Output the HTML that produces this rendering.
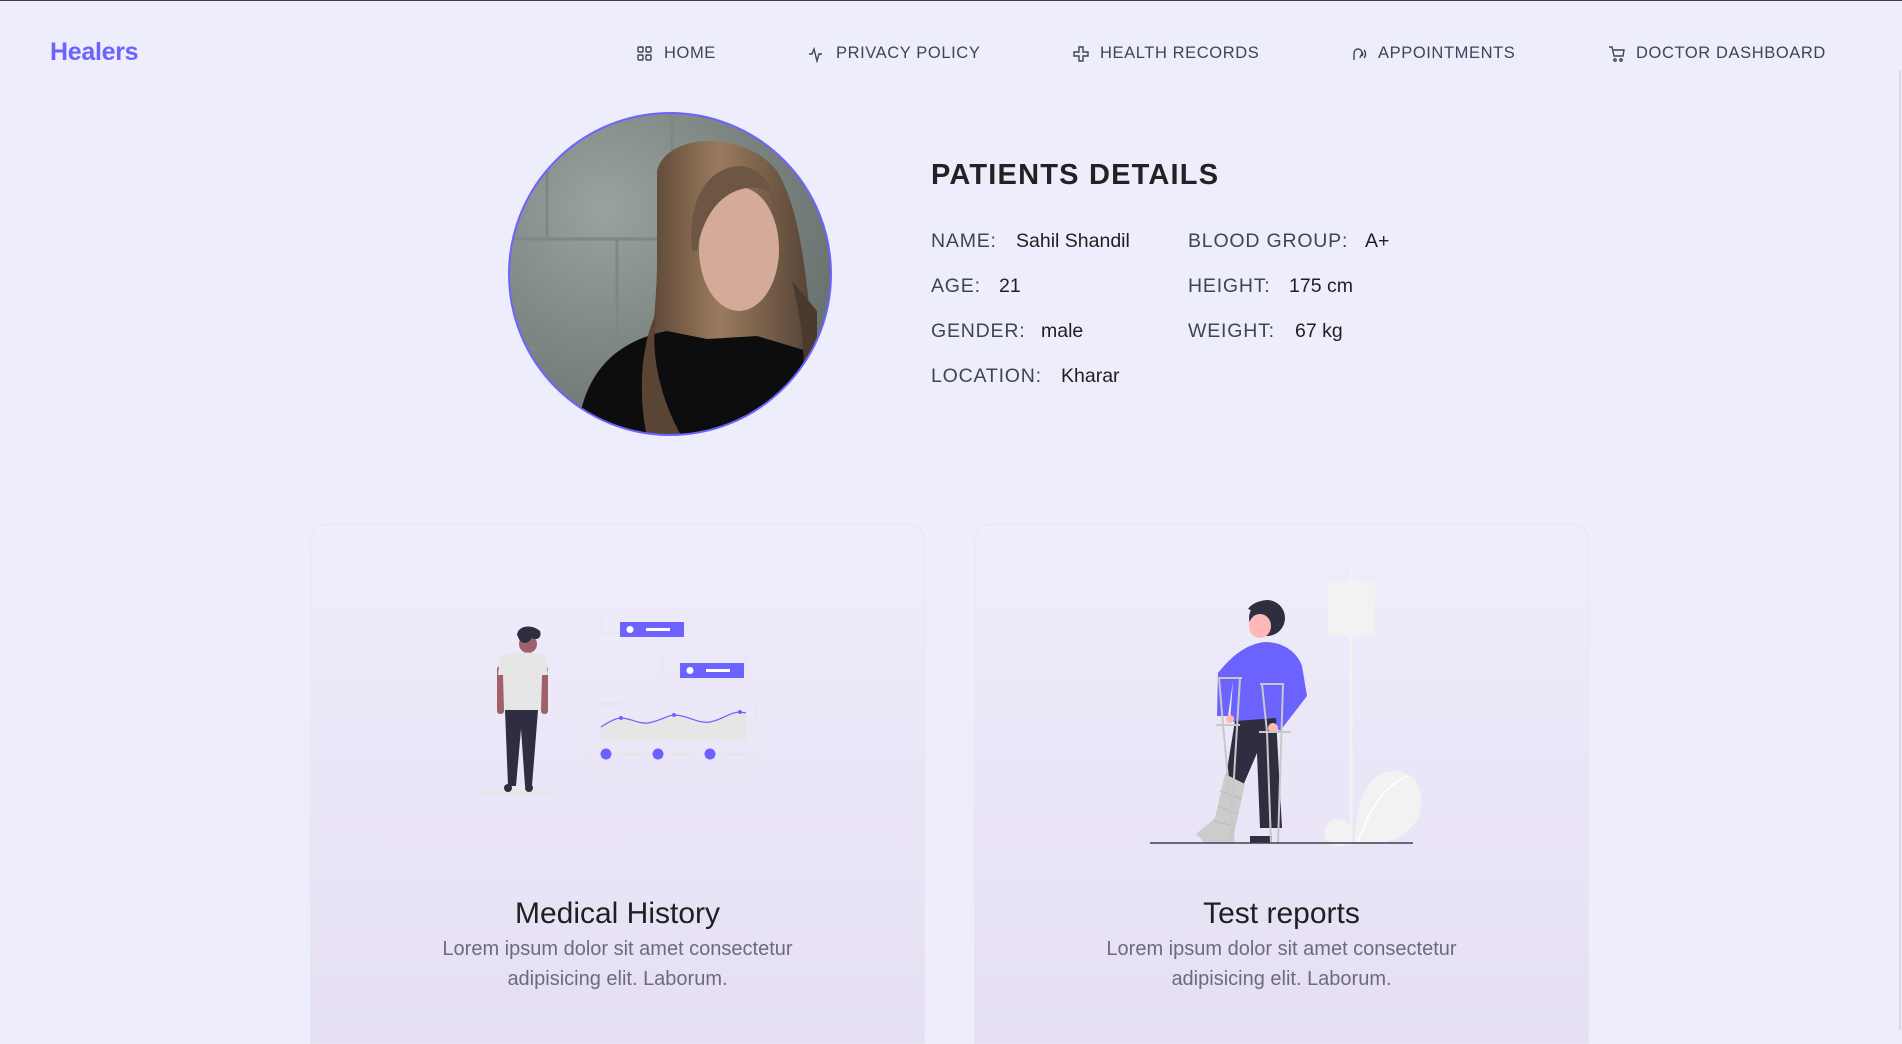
<!DOCTYPE html>
<html><head><meta charset="utf-8"><style>
*{margin:0;padding:0;box-sizing:border-box}
body{width:1902px;height:1029px;overflow:hidden;background:#eeedfb;font-family:"Liberation Sans",sans-serif;position:relative;border-top:1px solid #4a3a35}
.abs{position:absolute;white-space:nowrap}
.logo{left:50px;top:37px;font-size:25px;font-weight:bold;color:#6c63ff;letter-spacing:-0.3px}
.nav{top:43px;font-size:16.5px;color:#3d4556;letter-spacing:0.6px}
.nav svg{position:absolute;left:-28px;top:1px}
.title{left:931px;top:158px;font-size:29px;font-weight:bold;color:#222;letter-spacing:1.2px}
.lb{font-size:19.5px;color:#3d4556;letter-spacing:0.8px}
.vl{font-size:19.5px;color:#1f1f1f}
.card{position:absolute;top:523px;width:615px;height:520px;border-radius:16px 16px 0 0;border:1px solid #e7e5f3;background:linear-gradient(#efedfc,#ebe7f8 40%,#e6dff3)}
.ct{position:absolute;width:100%;text-align:center;top:372px;font-size:30px;color:#1f1f1f}
.cd{position:absolute;width:100%;text-align:center;top:409px;font-size:20px;line-height:30px;color:#6b6b80}
</style></head><body>
<div class="abs logo">Healers</div>

<div class="abs nav" style="left:664px"><svg width="17" height="17" viewBox="0 0 17 17" fill="none" stroke="#3d4556" stroke-width="1.4"><rect x="2" y="2" width="5" height="5" rx="1"/><rect x="10" y="2" width="5" height="5" rx="1"/><rect x="2" y="10" width="5" height="5" rx="1"/><rect x="10" y="10" width="5" height="5" rx="1"/></svg>HOME</div>
<div class="abs nav" style="left:836px"><svg width="18" height="18" viewBox="0 0 18 18" fill="none" stroke="#3d4556" stroke-width="1.4"><path d="M1 9h3l2-5 3 12 2-7h3"/></svg>PRIVACY POLICY</div>
<div class="abs nav" style="left:1100px"><svg width="18" height="18" viewBox="0 0 18 18" fill="none" stroke="#3d4556" stroke-width="1.4"><path d="M7 2h4v5h5v4h-5v5H7v-5H2V7h5z"/></svg>HEALTH RECORDS</div>
<div class="abs nav" style="left:1378px"><svg width="18" height="18" viewBox="0 0 18 18" fill="none" stroke="#3d4556" stroke-width="1.4"><path d="M4 15V8a4 4 0 0 1 8 0c0 2-2 3-2 5M12 7c1 1 1 3 0 4M14 5c2 2 2 6 0 8"/></svg>APPOINTMENTS</div>
<div class="abs nav" style="left:1636px"><svg width="18" height="18" viewBox="0 0 18 18" fill="none" stroke="#3d4556" stroke-width="1.4"><path d="M1 2h3l2 9h9l1-6H5"/><circle cx="7" cy="15" r="1.2"/><circle cx="13" cy="15" r="1.2"/></svg>DOCTOR DASHBOARD</div>

<div style="position:absolute;left:1899px;top:70px;width:2px;height:959px;background:#d8d6e4"></div>

<svg class="abs" style="left:507px;top:110px" width="326" height="326" viewBox="0 0 326 326">
<defs><clipPath id="c"><circle cx="163" cy="163" r="161"/></clipPath>
<radialGradient id="wall" cx="0.3" cy="0.3" r="0.9"><stop offset="0" stop-color="#9aa29e"/><stop offset="1" stop-color="#5f6966"/></radialGradient>
<linearGradient id="hair" x1="0" x2="1"><stop offset="0" stop-color="#5a4535"/><stop offset="0.4" stop-color="#9a7b5e"/><stop offset="1" stop-color="#4a3a2e"/></linearGradient></defs>
<g clip-path="url(#c)">
<rect width="326" height="326" fill="url(#wall)"/>
<path d="M0 128H150M0 238H120M40 0V128M110 128V238M165 0V40" stroke="#7d8784" stroke-width="3"/>
<path d="M150 60C160 20 240 20 270 60C300 110 300 200 310 260L320 326H140C140 260 150 200 150 150Z" fill="url(#hair)"/>
<ellipse cx="232" cy="138" rx="40" ry="62" fill="#d3ab98"/>
<path d="M185 140C180 90 200 55 235 55C260 60 270 80 272 120L262 80C240 70 200 80 190 140Z" fill="#6e5644"/>
<path d="M70 326C75 260 110 230 160 220L200 228L250 225L300 240L326 326Z" fill="#0d0d0f"/>
<path d="M150 200C140 250 160 300 175 326H140C130 280 135 230 150 200Z" fill="#5a4535"/>
<path d="M285 170C300 230 300 280 290 326H310V200Z" fill="#4a3a2e"/>
</g>
<circle cx="163" cy="163" r="161" fill="none" stroke="#6c63ff" stroke-width="2"/>
</svg>

<div class="abs title">PATIENTS DETAILS</div>
<div class="abs lb" style="left:931px;top:229px">NAME:</div><div class="abs vl" style="left:1016px;top:229px">Sahil Shandil</div>
<div class="abs lb" style="left:931px;top:274px">AGE:</div><div class="abs vl" style="left:999px;top:274px">21</div>
<div class="abs lb" style="left:931px;top:319px">GENDER:</div><div class="abs vl" style="left:1041px;top:319px">male</div>
<div class="abs lb" style="left:931px;top:364px">LOCATION:</div><div class="abs vl" style="left:1061px;top:364px">Kharar</div>
<div class="abs lb" style="left:1188px;top:229px">BLOOD GROUP:</div><div class="abs vl" style="left:1365px;top:229px">A+</div>
<div class="abs lb" style="left:1188px;top:274px">HEIGHT:</div><div class="abs vl" style="left:1289px;top:274px">175 cm</div>
<div class="abs lb" style="left:1188px;top:319px">WEIGHT:</div><div class="abs vl" style="left:1295px;top:319px">67 kg</div>

<div class="card" style="left:310px"><div class="ct">Medical History</div><div class="cd">Lorem ipsum dolor sit amet consectetur<br>adipisicing elit. Laborum.</div></div>
<div class="card" style="left:974px"><div class="ct">Test reports</div><div class="cd">Lorem ipsum dolor sit amet consectetur<br>adipisicing elit. Laborum.</div></div>

<svg class="abs" style="left:470px;top:590px" width="300" height="220" viewBox="0 0 300 220">
<ellipse cx="47" cy="202" rx="40" ry="3" fill="#e6e6e6"/>
<rect x="27" y="75" width="7" height="48" rx="3" fill="#a0616a"/><rect x="71" y="75" width="7" height="48" rx="3" fill="#a0616a"/>
<circle cx="58" cy="53" r="9" fill="#a0616a"/>
<path d="M47 44C48 34 62 33 70 40C72 46 68 50 62 47C58 53 54 53 50 50Z" fill="#2f2e41"/>
<path d="M30 66C40 60 66 60 76 66L78 84L72 84L71 119H34L33 84L28 84Z" fill="#e6e6e6"/>
<path d="M35 119H68L62 195H55L51 138L46 195H38Z" fill="#2f2e41"/>
<ellipse cx="38" cy="197" rx="4" ry="4" fill="#2f2e41"/><ellipse cx="59" cy="197" rx="4" ry="4" fill="#2f2e41"/>
<rect x="132" y="22" width="84" height="20" fill="none" stroke="#e6e6e6"/>
<rect x="150" y="31" width="64" height="15" fill="#6c63ff"/><circle cx="160" cy="38.5" r="3.5" fill="#fff"/><rect x="176" y="37" width="24" height="3" fill="#fff"/>
<rect x="192" y="62" width="84" height="20" fill="none" stroke="#e6e6e6"/>
<rect x="210" y="72" width="64" height="15" fill="#6c63ff"/><circle cx="220" cy="79.5" r="3.5" fill="#fff"/><rect x="236" y="78" width="24" height="3" fill="#fff"/>
<rect x="121" y="103" width="165" height="74" fill="none" stroke="#e6e6e6"/>
<rect x="128" y="111" width="24" height="3" fill="#e6e6e6"/>
<path d="M131 136C140 130 146 127 151 127C160 127 168 133 178 132C190 130 198 124 204 124C218 124 228 133 240 131C254 128 260 121 270 121L276 122V150H131Z" fill="#e6e6e6"/>
<path d="M131 136C140 130 146 127 151 127C160 127 168 133 178 132C190 130 198 124 204 124C218 124 228 133 240 131C254 128 260 121 270 121L276 122" fill="none" stroke="#6c63ff" stroke-width="1.2"/>
<circle cx="151" cy="127" r="2" fill="#6c63ff"/><circle cx="204" cy="124" r="2" fill="#6c63ff"/><circle cx="270" cy="121" r="2" fill="#6c63ff"/>
<circle cx="136" cy="163" r="5.5" fill="#6c63ff"/><rect x="149" y="162" width="24" height="3" fill="#e6e6e6"/>
<circle cx="188" cy="163" r="5.5" fill="#6c63ff"/><rect x="201" y="162" width="24" height="3" fill="#e6e6e6"/>
<circle cx="240" cy="163" r="5.5" fill="#6c63ff"/><rect x="253" y="162" width="24" height="3" fill="#e6e6e6"/>
</svg>

<svg class="abs" style="left:1130px;top:555px" width="300" height="300" viewBox="0 0 300 300">
<line x1="221" y1="8" x2="221" y2="287" stroke="#f2f2f2" stroke-width="3"/>
<rect x="198" y="25" width="47" height="55" rx="3" fill="#f2f2f2"/>
<circle cx="208" cy="277" r="14" fill="#f2f2f2"/>
<path d="M225 287C225 240 240 215 265 215C285 215 295 235 290 255C285 275 265 287 245 287Z" fill="#f2f2f2"/>
<path d="M228 287C240 250 255 230 277 220" stroke="#fff" stroke-width="1.5" fill="none"/>
<circle cx="137" cy="62" r="18" fill="#2f2e41"/>
<path d="M118 53C125 43 145 40 153 55L140 62Z" fill="#2f2e41"/>
<ellipse cx="130" cy="70" rx="11" ry="12" fill="#ffb8b8"/>
<path d="M88 117C100 102 115 88 135 86C155 86 168 98 172 110L177 140L150 175L142 168L153 140L147 163L100 166L103 125L98 160L87 160Z" fill="#6c63ff"/>
<path d="M105 165L146 162L152 272H130L127 197L112 232L95 226Z" fill="#2f2e41"/>
<path d="M95 218L115 228L102 287H75L66 278L85 262Z" fill="#ccc"/>
<path d="M90 235L112 243M88 250L108 258M84 265L104 270" stroke="#bbb" stroke-width="1"/>
<path d="M120 280L142 280L142 287L120 287Z" fill="#2f2e41"/>
<ellipse cx="100" cy="163" rx="4" ry="4" fill="#ffb8b8"/><ellipse cx="143" cy="172" rx="5" ry="5" fill="#ffb8b8"/>
<g stroke="#c8c8c8" stroke-width="2" fill="none">
<path d="M87 122H112M89 122L93 169L104 287M110 122L100 287M86 169H110"/>
<path d="M130 128H154M132 128L137 176L141 287M153 128L148 287M129 176H161"/>
</g>
<line x1="20" y1="287" x2="283" y2="287" stroke="#3f3d56" stroke-width="1.5"/>
</svg>
</body></html>
